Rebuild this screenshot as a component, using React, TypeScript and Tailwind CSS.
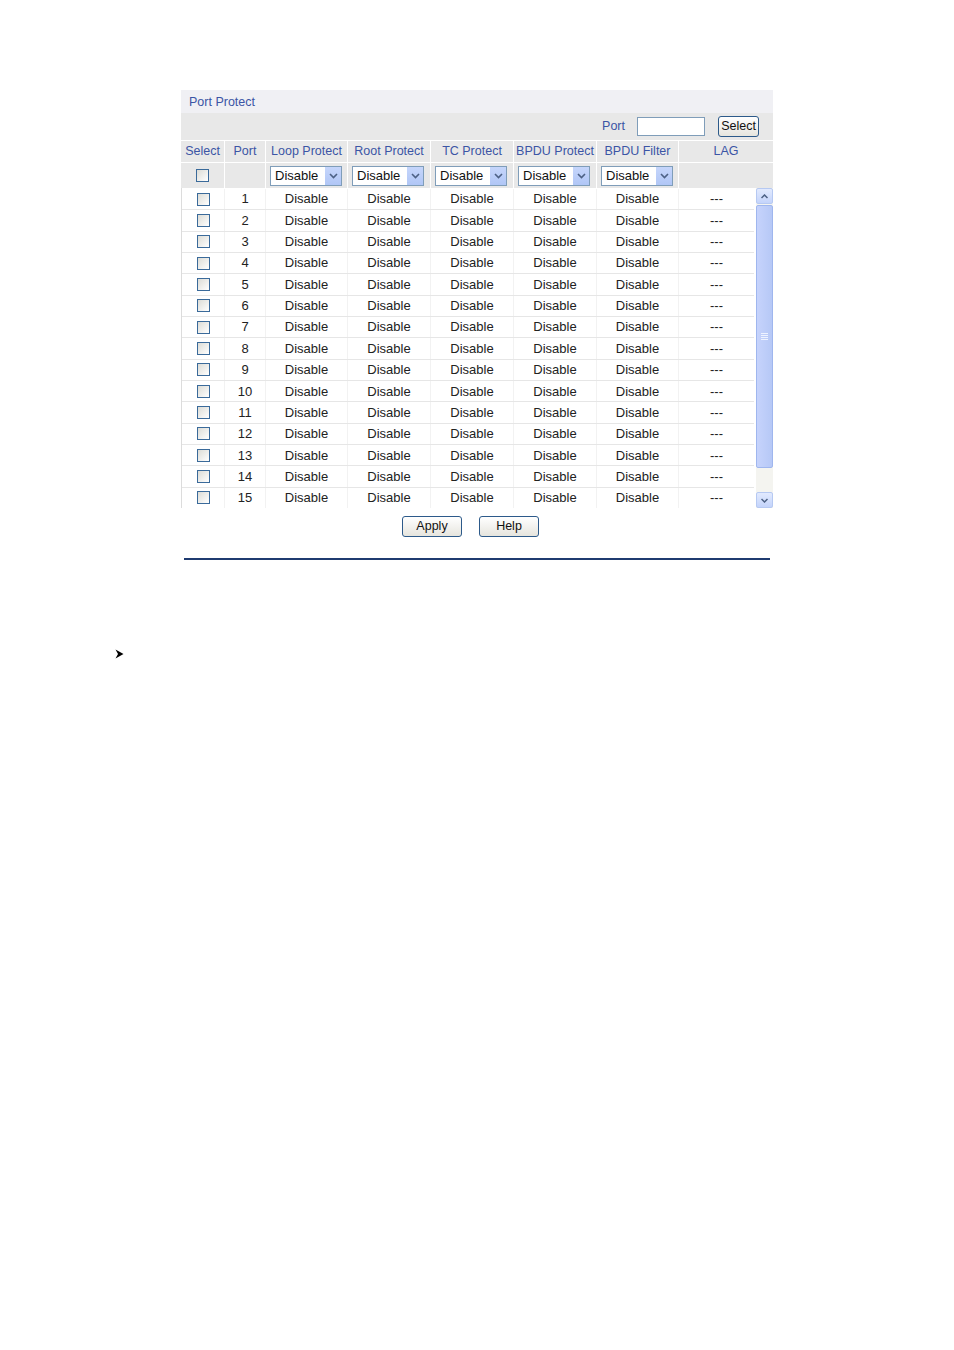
import React from "react";

const cols = [
  { key: "select", label: "Select", w: "w-[44px]" },
  { key: "port", label: "Port", w: "w-[41px]" },
  { key: "loop", label: "Loop Protect", w: "w-[82px]" },
  { key: "root", label: "Root Protect", w: "w-[83px]" },
  { key: "tc", label: "TC Protect", w: "w-[83px]" },
  { key: "bpdu", label: "BPDU Protect", w: "w-[83px]" },
  { key: "filter", label: "BPDU Filter", w: "w-[82px]" },
];

const ports = Array.from({ length: 15 }, (_, i) => i + 1);

function Checkbox() {
  return (
    <span className="inline-block w-[13px] h-[13px] border border-[#3a6a9a] bg-gradient-to-br from-[#dcdcd6] to-[#ffffff]" />
  );
}

function Dropdown() {
  return (
    <div className="flex items-stretch w-[72px] h-[20px] border border-[#7f9db9] bg-white">
      <span className="flex-1 pl-[4px] text-[13px] leading-[18px] text-[#111]">Disable</span>
      <span className="w-[17px] flex items-center justify-center bg-gradient-to-b from-[#c6d6fb] to-[#b0c6f6] border-l border-white">
        <svg width="9" height="6" viewBox="0 0 9 6">
          <path d="M1 1 L4.5 4.5 L8 1" stroke="#4d6185" strokeWidth="1.6" fill="none" />
        </svg>
      </span>
    </div>
  );
}

function XpButton({ label, w }: { label: string; w: string }) {
  return (
    <button
      className={`${w} h-[21px] rounded-[3px] border border-[#2d5a8a] bg-gradient-to-b from-[#ffffff] to-[#e6e5de] text-[12.5px] text-[#111] leading-[19px]`}
    >
      {label}
    </button>
  );
}

export default function App() {
  return (
    <div className="w-[954px] h-[1350px] bg-white relative" style={{ fontFamily: '"Liberation Sans", Arial, sans-serif' }}>
      <div className="pt-[90px] pl-[181px]">
        <div className="w-[592px]">
          {/* title */}
          <div className="h-[23px] bg-[#f0f0f4] text-[12.5px] text-[#3b55a5] pl-[8px] leading-[25px]">Port Protect</div>
          {/* search bar */}
          <div className="h-[27px] bg-[#e8e8e8] flex items-center justify-end pr-[14px]">
            <span className="text-[12.5px] text-[#3b55a5] mr-[12px]">Port</span>
            <span className="w-[68px] h-[19px] border border-[#7f9db9] bg-white mr-[13px]" />
            <XpButton label="Select" w="w-[41px]" />
          </div>
          {/* header row */}
          <div className="flex h-[22px] bg-[#e8e8e8] border-t border-white text-[12.5px] text-[#3b55a5]">
            {cols.map((c) => (
              <div key={c.key} className={`${c.w} flex items-center justify-center border-r border-white whitespace-nowrap`}>
                {c.label}
              </div>
            ))}
            <div className="flex-1 flex items-center justify-center">LAG</div>
          </div>
          {/* select-all row */}
          <div className="flex h-[26px] bg-[#e8e8e8] border-t border-white">
            <div className="w-[44px] flex items-center justify-center border-r border-white">
              <Checkbox />
            </div>
            <div className="w-[41px] border-r border-white" />
            {cols.slice(2).map((c) => (
              <div key={c.key} className={`${c.w} flex items-center pl-[4px] border-r border-white`}>
                <Dropdown />
              </div>
            ))}
            <div className="flex-1" />
          </div>
          {/* body */}
          <div className="flex h-[320px] border-l border-[#dcdcdc]">
            <div className="flex-1 overflow-hidden pt-[1px]">
              {ports.map((p) => (
                <div key={p} className="flex h-[21.35px] border-b border-[#e6e6e6] text-[13px] text-[#222]">
                  <div className="w-[43px] flex items-center justify-center border-r border-[#f2f2f2]">
                    <Checkbox />
                  </div>
                  <div className="w-[41px] flex items-center justify-center border-r border-[#f2f2f2]">{p}</div>
                  {cols.slice(2).map((c) => (
                    <div key={c.key} className={`${c.w} flex items-center justify-center border-r border-[#f2f2f2]`}>
                      Disable
                    </div>
                  ))}
                  <div className="flex-1 flex items-center justify-center">---</div>
                </div>
              ))}
            </div>
            {/* scrollbar */}
            <div className="w-[17px] ml-[2px] flex flex-col bg-[#f4f4f0]">
              <div className="h-[16px] rounded-[2px] border border-[#b6c9f2] bg-gradient-to-b from-[#e2eafe] to-[#c4d4fb] flex items-center justify-center">
                <svg width="7" height="5" viewBox="0 0 7 5">
                  <path d="M0.5 4 L3.5 1 L6.5 4" stroke="#4d6185" strokeWidth="1.5" fill="none" />
                </svg>
              </div>
              <div className="h-[263px] mt-[1px] rounded-[2px] border border-[#9fb6ee] bg-gradient-to-r from-[#c6d3fc] to-[#b6c8f6] flex items-center justify-center">
                <div className="flex flex-col gap-[1px]">
                  <span className="w-[7px] h-[1px] bg-[#eef3ff]" />
                  <span className="w-[7px] h-[1px] bg-[#eef3ff]" />
                  <span className="w-[7px] h-[1px] bg-[#eef3ff]" />
                  <span className="w-[7px] h-[1px] bg-[#eef3ff]" />
                </div>
              </div>
              <div className="flex-1" />
              <div className="h-[16px] rounded-[2px] border border-[#b6c9f2] bg-gradient-to-b from-[#e2eafe] to-[#c4d4fb] flex items-center justify-center">
                <svg width="7" height="5" viewBox="0 0 7 5">
                  <path d="M0.5 1 L3.5 4 L6.5 1" stroke="#4d6185" strokeWidth="1.5" fill="none" />
                </svg>
              </div>
            </div>
          </div>
          {/* buttons */}
          <div className="flex justify-center gap-[17px] mt-[8px] pr-[13px]">
            <XpButton label="Apply" w="w-[60px]" />
            <XpButton label="Help" w="w-[60px]" />
          </div>
          <div className="mt-[21px] ml-[3px] w-[586px] h-[2px] bg-[#1f3b70]" />
        </div>
      </div>
      <div className="pl-[115px] mt-[89px]">
        <svg width="9" height="10" viewBox="0 0 9 10">
          <path d="M0.5 0.5 L8.5 5 L0.5 9.5 L3 5 Z" fill="#000" />
        </svg>
      </div>
    </div>
  );
}
